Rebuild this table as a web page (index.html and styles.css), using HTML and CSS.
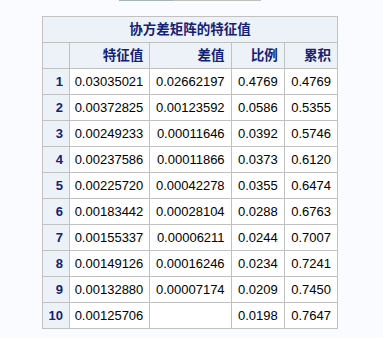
FILE: index.html
```html
<!DOCTYPE html>
<html lang="zh">
<head>
<meta charset="utf-8">
<title>协方差矩阵的特征值</title>
<link rel="stylesheet" href="styles.css">
</head>
<body>
<div class="topline"></div>
<table class="eig">
  <colgroup>
    <col class="c0"><col class="c1"><col class="c2"><col class="c3"><col class="c4">
  </colgroup>
  <thead>
    <tr><th colspan="5" class="title">协方差矩阵的特征值</th></tr>
    <tr><th class="corner"></th><th>特征值</th><th>差值</th><th>比例</th><th>累积</th></tr>
  </thead>
  <tbody>
    <tr><th>1</th><td>0.03035021</td><td>0.02662197</td><td>0.4769</td><td>0.4769</td></tr>
    <tr><th>2</th><td>0.00372825</td><td>0.00123592</td><td>0.0586</td><td>0.5355</td></tr>
    <tr><th>3</th><td>0.00249233</td><td>0.00011646</td><td>0.0392</td><td>0.5746</td></tr>
    <tr><th>4</th><td>0.00237586</td><td>0.00011866</td><td>0.0373</td><td>0.6120</td></tr>
    <tr><th>5</th><td>0.00225720</td><td>0.00042278</td><td>0.0355</td><td>0.6474</td></tr>
    <tr><th>6</th><td>0.00183442</td><td>0.00028104</td><td>0.0288</td><td>0.6763</td></tr>
    <tr><th>7</th><td>0.00155337</td><td>0.00006211</td><td>0.0244</td><td>0.7007</td></tr>
    <tr><th>8</th><td>0.00149126</td><td>0.00016246</td><td>0.0234</td><td>0.7241</td></tr>
    <tr><th>9</th><td>0.00132880</td><td>0.00007174</td><td>0.0209</td><td>0.7450</td></tr>
    <tr><th>10</th><td>0.00125706</td><td></td><td>0.0198</td><td>0.7647</td></tr>
  </tbody>
</table>
</body>
</html>
```
FILE: styles.css
```css
html, body {
  margin: 0;
  padding: 0;
  background: #fafbfe;
}
body {
  font-family: "Liberation Sans", Arial, "Noto Sans CJK SC", sans-serif;
  font-size: 13px;
  color: #000;
}
.topline {
  height: 1px;
  width: 142px;
  margin-left: 119px;
  background: linear-gradient(to right, #a9b4b7 0, #a9b4b7 54px, #c0c0c0 54px, #c0c0c0 100%);
}
.eig {
  margin: 15px 0 0 42px;
  border-collapse: separate;
  border-spacing: 0;
  table-layout: fixed;
  width: 296px;
  border-top: 1px solid #c1c1c1;
  border-left: 1px solid #c1c1c1;
}
.c0 { width: 27px; }
.c1 { width: 80px; }
.c2 { width: 81px; }
.c3 { width: 53px; }
.c4 { width: 53px; }
.eig th, .eig td {
  box-sizing: border-box;
  height: 26px;
  padding: 0 6px 0 4px;
  border-right: 1px solid #c1c1c1;
  border-bottom: 1px solid #c1c1c1;
  text-align: right;
  vertical-align: middle;
  white-space: nowrap;
  line-height: 16px;
}
.eig td {
  background: #fff;
  color: #000;
}
.eig th {
  background: #edf2f9;
  color: #112277;
  font-weight: bold;
  font-size: 13.5px;
  font-family: "Liberation Sans", Arial, "Noto Sans CJK SC", sans-serif;
}
.eig tbody th {
  font-size: 13px;
}
.eig th.title {
  text-align: center;
  padding: 0 4px;
}
```
